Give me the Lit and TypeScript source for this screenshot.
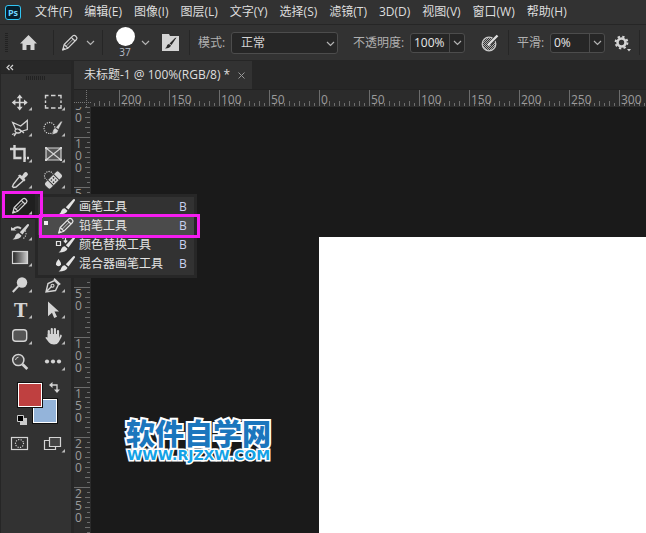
import { LitElement, html, svg, css, nothing } from "lit";
import { customElement, state } from "lit/decorators.js";

const MENUS = ["文件(F)", "编辑(E)", "图像(I)", "图层(L)", "文字(Y)", "选择(S)", "滤镜(T)", "3D(D)", "视图(V)", "窗口(W)", "帮助(H)"];

const brush = svg`<path d="M25 6.500L18.500 15.500L15.800 13.200L23.300 5.200Q25.300 4.300 25 6.500ZM14.800 14.200L17.500 16.700Q16.500 20.300 8.500 20.500Q11 19 11.500 16.500Q12.500 14.200 14.800 14.200Z" fill="currentColor"/>`;
const pencil = svg`<g fill="none" stroke="currentColor" stroke-width="1.200" stroke-linejoin="round"><path d="M8.700 20L10.200 14.500L18.800 5.900Q20.300 4.700 21.900 6.200Q23.700 7.900 22.500 9.500L13.900 18.200Z"/><path d="M10.200 14.500L13.900 18.200M17.300 7.300L21 11"/><path d="M12 16.400L19.300 9" stroke-width=".8"/></g><path d="M8.300 20.500L9.500 17L11.800 19.400Z" fill="currentColor"/>`;
const dots = "0.1 2.2";

interface Tool { name: string; corner?: boolean; art: unknown }

const TOOLS: Tool[] = [
  { name: "移动工具", art: svg`<path d="M15.700 7V20M9 13.500H22.500" stroke="currentColor" stroke-width="1.600"/><path d="M15.700 5.500L18.700 9.200H12.700ZM15.700 21.500L18.700 17.800H12.700ZM7.700 13.500L11.400 10.500V16.500ZM23.700 13.500L20 10.500V16.500Z" fill="currentColor"/>` },
  { name: "矩形选框工具", art: svg`<path d="M8.500 9.500V6.500H11.500M14 6.500H18.500M21 6.500H24V9.500M24 11.500V14M24 16V19H21M18.500 19H14M11.500 19H8.500V16M8.500 14V11.500" fill="none" stroke="currentColor" stroke-width="1.400"/>` },
  { name: "多边形套索工具", art: svg`<path d="M12 15L8.700 7.500L16.700 11L23.300 5.500V14.500L17 16.500M17 16.500Q14 12.500 11.500 14.500Q10 17 13 17.800Q16 18.500 17 16.500ZM12.500 17.500L10 21M10.500 18.500L8 19.500M15 14L20 18" fill="none" stroke="currentColor" stroke-width="1.300"/>` },
  { name: "快速选择工具", art: svg`<circle cx="12.500" cy="13" r="5.500" fill="none" stroke="currentColor" stroke-width="1.300" stroke-linecap="round" stroke-dasharray=${dots}/><path d="M25.500 6.500L21.500 14.500L18.800 12.500L24 6.200ZM18.200 13L21.300 15.300Q21 19 14.500 19.500Q16.500 17.500 16 15.500Q16.500 13.500 18.200 13Z" fill="currentColor" stroke="#323232" stroke-width=".4"/>` },
  { name: "裁剪工具", art: svg`<path d="M6 8H20.500V21M10.500 4V17H17.500M19.500 17H22M23 17H25" fill="none" stroke="currentColor" stroke-width="2.400"/>` },
  { name: "图框工具", art: svg`<rect x="9" y="7" width="15" height="12" fill="#555"/><path d="M9 7H24V19H9ZL24 19M24 7L9 19" fill="none" stroke="currentColor" stroke-width="1.200"/><path d="M8 6h2v2H8zM23 6h2v2h-2zM8 18h2v2H8zM23 18h2v2h-2z" fill="currentColor"/>` },
  { name: "吸管工具", art: svg`<path d="M15.500 9.500L19.500 13.500L12 20L9.500 20.500L8.500 19.500L9.500 17Z" fill="none" stroke="currentColor" stroke-width="1.400"/><path d="M14 8.500L16 7.500L18 9L20 6Q22 4.200 23.400 6Q24.800 7.500 23 9L20.400 11.200L21.500 13L20.200 14.600Z" fill="currentColor"/>` },
  { name: "污点修复画笔工具", art: svg`<circle cx="12" cy="9" r="4.500" fill="none" stroke="currentColor" stroke-width="1.300" stroke-linecap="round" stroke-dasharray=${dots}/><g transform="rotate(-45 16.500 13)"><rect x="6.500" y="8.700" width="20" height="8.600" rx="2.500" fill="currentColor" stroke="#323232"/><path d="M12.500 9V17M20.500 9V17" stroke="#323232"/><g fill="#323232"><circle cx="15" cy="11.500" r=".8"/><circle cx="18" cy="11.500" r=".8"/><circle cx="15" cy="14.500" r=".8"/><circle cx="18" cy="14.500" r=".8"/></g></g>` },
  { name: "铅笔工具", art: pencil },
  { name: "", art: nothing },
  { name: "历史记录画笔工具", art: svg`${brush}<path d="M9 10.500Q12.500 6.500 17 9.500" fill="none" stroke="currentColor" stroke-width="2"/><path d="M7 8L12.500 11.500H7Z" fill="currentColor"/><path d="M21.500 12Q23.500 17 18 20.500" fill="none" stroke="currentColor" stroke-width="1.300" stroke-linecap="round" stroke-dasharray="0.1 2.500"/>` },
  { name: "", art: nothing },
  { name: "渐变工具", art: svg`<defs><linearGradient id="g"><stop stop-color="#222"/><stop offset="1" stop-color="#ccc"/></linearGradient></defs><rect x="8.500" y="6.500" width="15" height="12" fill="url(#g)" stroke="currentColor" stroke-width="1.200"/>` },
  { name: "", art: nothing },
  { name: "减淡工具", art: svg`<circle cx="18" cy="11.500" r="5.200" fill="currentColor"/><path d="M14.500 15L8.800 21" stroke="currentColor" stroke-width="2"/>` },
  { name: "钢笔工具", art: svg`<path d="M9 21L11 12.500L17.500 9.500L21.500 13.500L18.500 19.500ZM9 21L15 15" fill="none" stroke="currentColor" stroke-width="1.400"/><circle cx="15.500" cy="14.800" r="1.500" fill="none" stroke="currentColor" stroke-width="1.100"/><path d="M17.500 7L23.800 13L22.300 14.200L16.500 8.500Z" fill="currentColor"/>` },
  { name: "横排文字工具", art: svg`<text x="16.800" y="19.500" text-anchor="middle" font-family="DejaVu Serif" font-weight="bold" font-size="18" fill="currentColor">T</text>` },
  { name: "路径选择工具", art: svg`<path d="M11 4.500L22 14.500H17.500L20 19.800L17.200 21L15 15.800L11 19.200Z" fill="currentColor"/>` },
  { name: "圆角矩形工具", art: svg`<rect x="8.700" y="6.700" width="14" height="11.600" rx="3" fill="#555" stroke="currentColor" stroke-width="1.400"/>` },
  { name: "抓手工具", art: svg`<path d="M11.800 14V8M14.800 13V6M17.900 13V6.200M21 14V8" stroke="currentColor" stroke-width="2.200" stroke-linecap="round"/><path d="M10.700 11H22.100V15L23.500 11.500Q25.300 11.500 24.700 13.500L21.800 19Q20.500 21.500 17 21.500Q13.500 21.500 12 19.500L8.500 15Q8.500 13.200 10.700 14.500Z" fill="currentColor"/>` },
  { name: "缩放工具", corner: false, art: svg`<circle cx="14.300" cy="11" r="5.600" fill="#444" stroke="currentColor" stroke-width="1.500"/><path d="M18.500 15.300L23.300 20" stroke="currentColor" stroke-width="2.800"/><path d="M11.500 11Q11.800 8.500 14.500 8.200" stroke="currentColor" fill="none"/>` },
  { name: "编辑工具栏", art: svg`<g fill="currentColor"><circle cx="10" cy="12.500" r="2.100"/><circle cx="16" cy="12.500" r="2.100"/><circle cx="22" cy="12.500" r="2.100"/></g>` },
];
// Cells of the right column that sit beneath the open flyout.
const COVERED = new Set([9, 11, 13]);

const FLYOUT = [
  { name: "画笔工具", art: brush },
  { name: "铅笔工具", art: pencil, on: true },
  { name: "颜色替换工具", art: svg`${brush}<path d="M6.500 9.500h4v4h-4zM12 6h2M15.500 5V10M13.800 8.500L15.500 10.500L17.200 8.500" fill="none" stroke="currentColor" stroke-width="1.200"/>` },
  { name: "混合器画笔工具", art: svg`${brush}<path d="M8.500 8Q11.300 11.500 11 13.200Q10.500 15.300 8.500 15.300Q6.500 15.300 6 13.200Q5.700 11.500 8.500 8Z" fill="currentColor"/>` },
];

const RULER_STEP = 50;
const chevron = html`<svg class="chev" viewBox="0 0 9 6"><path d="M1 1L4.500 4.500L8 1" fill="none" stroke="currentColor" stroke-width="1.200"/></svg>`;

@customElement("ps-toolbar")
export class PsToolbar extends LitElement {
  static styles = css`
    * { box-sizing: border-box; }
    :host { display: flex; flex-direction: column; width: 72px; flex: none; background: #323232; border: solid #262626; border-width: 0 1px; color: #d4d4d4; position: relative; z-index: 1; }
    button { font: inherit; color: inherit; background: none; border: 0; padding: 0; margin: 0; display: block; }
    svg { display: block; }
    .collapse { height: 13px; background: #282828; padding-left: 5px; border-bottom: 1px solid #262626; text-align: left; }
    .grip { width: 19px; height: 4px; margin: 2px 0 9px 25px; background: repeating-linear-gradient(90deg, #222 0 1px, transparent 1px 2px); }
    .tools { display: grid; grid-template-columns: 33px 33px; grid-auto-rows: 26px; margin-left: 3px; }
    .cell { position: relative; }
    .cell svg { width: 33px; height: 26px; }
    .active { background: #1f1f1f; }
    .mark { position: absolute; border: 3px solid #f51df0; pointer-events: none; }
    .tool-mark { left: -2px; top: -2px; width: 41px; height: 27px; z-index: 4; }
    .colors { position: relative; height: 55px; }
    .swatch { position: absolute; width: 26px; height: 26px; border: 1px solid #111; box-shadow: inset 0 0 0 1px #fff; }
    .fore { left: 16px; top: 7px; background: #bf4040; z-index: 1; }
    .back { left: 31px; top: 23px; background: #94b4da; }
    .swap { position: absolute; left: 48px; top: 7px; }
    .reset { position: absolute; left: 16px; top: 40px; }
    .flyout { position: absolute; left: 31px; top: 1px; z-index: 3; width: 162px; border: 3px solid #272727; background: #323232; margin: 0; padding: 0 0 2px; list-style: none; }
    .item { position: relative; }
    .item button { display: grid; grid-template-columns: 41px 1fr 14px; align-items: center; width: 152px; height: 19px; font-size: 12px; line-height: 19px; text-align: left; color: #e4e4e4; }
    .item svg { width: 33px; height: 26px; margin: -4px 0 -4px 12px; }
    .on { background: #4b4b4b; }
    .on button::before { content: ""; position: absolute; left: 6px; top: 5px; width: 4px; height: 4px; background: #eee; }
    .item-mark { left: 1px; top: -2px; width: 161px; height: 24px; z-index: 2; }
    kbd { font: inherit; color: #c9d3f0; text-align: center; }
  `;

  tool(t: Tool, i: number) {
    if (COVERED.has(i)) return html`<div class="cell"></div>`;
    const art = html`<button aria-label=${t.name} title=${t.name}><svg viewBox="0 0 33 26">${t.art}${t.corner === false ? nothing : svg`<path d="M28 18V21.500H24.500Z" fill="#bbb"/>`}</svg></button>`;
    if (i !== 8) return html`<div class="cell">${art}</div>`;
    return html`<div class="cell active">${art}<span class="mark tool-mark"></span>
      <ul class="flyout">${FLYOUT.map((f) => html`<li class="item ${f.on ? "on" : ""}">
        <button><svg viewBox="0 0 33 26">${f.art}</svg><span>${f.name}</span><kbd>B</kbd></button>
        ${f.on ? html`<span class="mark item-mark"></span>` : nothing}</li>`)}</ul></div>`;
  }

  render() {
    return html`
      <button class="collapse" aria-label="折叠"><svg width="8" height="7" viewBox="0 0 8 7"><path d="M3.500 1L1 3.500L3.500 6M7 1L4.500 3.500L7 6" fill="none" stroke="currentColor" stroke-width="1.200"/></svg></button>
      <div class="grip"></div>
      <div class="tools">${TOOLS.map((t, i) => this.tool(t, i))}</div>
      <div class="colors">
        <button class="swatch fore" aria-label="前景色"></button>
        <button class="swatch back" aria-label="背景色"></button>
        <button class="swap" aria-label="切换颜色"><svg width="11" height="11" viewBox="0 0 11 11"><path d="M2 3H8V9" fill="none" stroke="currentColor" stroke-width="1.300"/><path d="M0 3L3.500 0V6ZM8 11L5 7.500H11Z" fill="currentColor"/></svg></button>
        <button class="reset" aria-label="默认颜色"><svg width="10" height="10" viewBox="0 0 10 10"><path d="M3 3H10V10H3Z" fill="#ccc"/><path d="M.5.5H6.500V6.500H.5Z" fill="#000" stroke="#ccc"/></svg></button>
      </div>
      <div class="tools">
        <button class="cell" aria-label="快速蒙版"><svg viewBox="0 0 33 26"><rect x="7.500" y="7.500" width="16" height="12" fill="none" stroke="currentColor" stroke-width="1.200"/><circle cx="15.500" cy="13.500" r="4" fill="none" stroke="currentColor" stroke-width="1.300" stroke-linecap="round" stroke-dasharray="0.100 2.400"/></svg></button>
        <button class="cell" aria-label="屏幕模式"><svg viewBox="0 0 33 26"><path d="M7.500 10.500H18.500V19.500H7.500Z" fill="none" stroke="currentColor" stroke-width="1.200"/><path d="M12.500 7.500H23.500V16.500H12.500Z" fill="#444" stroke="currentColor" stroke-width="1.200"/><path d="M28 19V22.500H24.500Z" fill="#bbb"/></svg></button>
      </div>`;
  }
}

@customElement("app-root")
export class AppRoot extends LitElement {
  static styles = css`
    :host { display: flex; flex-direction: column; height: 100vh; overflow: hidden; background: #262626; color: #dedede; font: 12px/16px "Open Sans", "Noto Sans CJK SC", sans-serif; }
    * { box-sizing: border-box; }
    button, input, select { font: inherit; color: inherit; background: none; border: 0; padding: 0; margin: 0; }
    svg { display: block; flex: none; }
    .menubar { display: flex; align-items: center; height: 24px; flex: none; background: #323232; padding-left: 5px; white-space: nowrap; }
    .logo { width: 16px; height: 15px; border: 1px solid #31c5f4; border-radius: 3px; background: #061e2c; color: #6fd6ff; font: bold 9px/13px "Open Sans", sans-serif; text-align: center; margin-right: 14px; }
    .menus { display: flex; gap: 12px; }
    .options { display: flex; align-items: center; height: 37px; flex: none; border: solid #262626; border-width: 1px 0; background: #323232; white-space: nowrap; color: #d4d4d4; }
    .grip { width: 3px; height: 20px; margin: 0 12px 0 5px; background: repeating-linear-gradient(#222 0 1px, transparent 1px 2px); }
    .sep { width: 1px; height: 25px; background: #262626; flex: none; }
    .home { margin-right: 16px; }
    .pencil { margin-right: 3px; }
    .chev { width: 9px; height: 6px; color: #b4b4b4; }
    .drop { margin-right: 7px; }
    .size { display: flex; flex-direction: column; align-items: center; width: 20px; margin: 0 6px 0 12px; font-size: 10px; line-height: 12px; color: #b9bfc8; }
    .dot { width: 19px; height: 19px; border-radius: 50%; background: #fff; }
    .folder { margin: 0 10px 0 5px; }
    .label { color: #b0b0b0; width: 33px; margin-left: 8px; flex: none; }
    .opacity-label { width: 57px; margin-left: 15px; }
    .pick { position: relative; width: 107px; }
    .pick select { appearance: none; width: 107px; height: 22px; border: 1px solid #4c4c4c; border-radius: 3px; background: #262626; padding: 0 20px 0 9px; }
    .pick .chev { position: absolute; right: 3px; top: 9px; }
    .combo { display: flex; width: 55px; height: 20px; border: 1px solid #4c4c4c; border-radius: 3px; background: #262626; }
    .combo input { width: 38px; padding-left: 3px; color: #e8e8e8; }
    .combo button { flex: 1; border-left: 1px solid #4c4c4c; display: grid; place-items: center; }
    .pressure { margin: 0 9px 0 16px; }
    .gear { margin: 0 6px 0 9px; }
    .body { flex: 1; min-height: 0; display: flex; }
    .doc { flex: 1; min-width: 0; display: flex; flex-direction: column; margin-left: 2px; }
    .tabs { display: flex; height: 29px; flex: none; border-bottom: 1px solid #222; }
    .tab { display: flex; align-items: center; gap: 8px; width: 178px; padding-left: 10px; background: #323232; white-space: nowrap; }
    .view { flex: 1; min-height: 0; display: grid; grid-template-columns: 17px 1fr; grid-template-rows: 17px 1fr; }
    .corner { background: #2b2b2b; }
    .hr, .vr { overflow: hidden; background: #2b2b2b; color: #9b9b9b; min-width: 0; min-height: 0; }
    .hr > div { display: flex; margin-left: -22px; }
    .hseg { flex: none; width: 50px; height: 16px; border-left: 1px solid #6c6c6c; padding-left: 1px; line-height: 20px;
      background: linear-gradient(90deg, #6c6c6c 1px, transparent 1px) 4px 100% / 10px 3px repeat-x, linear-gradient(90deg, #6c6c6c 1px, transparent 1px) 9px 100% / 10px 5px repeat-x; }
    .vr > div { margin-top: -20px; }
    .vseg { height: 50px; width: 16px; border-top: 1px solid #6c6c6c; padding-left: 1px; line-height: 12px; display: flex; flex-direction: column;
      background: linear-gradient(#6c6c6c 1px, transparent 1px) 100% 4px / 3px 10px repeat-y, linear-gradient(#6c6c6c 1px, transparent 1px) 100% 9px / 5px 10px repeat-y; }
    .vseg span { height: 12px; flex: none; }
    .canvas { position: relative; background: #1a1a1a; padding: 130px 0 0 228px; display: flex; min-width: 0; min-height: 0; }
    .art { flex: 1; background: #fff; }
    .mark { position: absolute; left: 35px; top: 309px; text-align: center; white-space: nowrap; }
    .mark-cn { font: 900 29px/32px "Noto Sans CJK SC", sans-serif; color: #1b76bd; -webkit-text-stroke: 4px #fff; paint-order: stroke fill; }
    .mark-url { font: bold 14px/14px "DejaVu Sans", sans-serif; color: #14a2e6; -webkit-text-stroke: 3px #fff; paint-order: stroke fill; }
  `;

  @state() private columns = 0;
  @state() private rows = 0;

  private measure = () => {
    this.columns = Math.ceil((window.innerWidth - 69) / RULER_STEP);
    this.rows = Math.ceil((window.innerHeight - 87) / RULER_STEP);
  };

  connectedCallback() {
    super.connectedCallback();
    this.measure();
    window.addEventListener("resize", this.measure);
  }

  disconnectedCallback() {
    window.removeEventListener("resize", this.measure);
    super.disconnectedCallback();
  }

  // The first segment of each ruler is partly scrolled out of view.
  horizontal() {
    return Array.from({ length: this.columns }, (_, i) =>
      html`<span class="hseg">${i === 0 ? "" : Math.abs(i - 5) * RULER_STEP}</span>`);
  }

  vertical() {
    return Array.from({ length: this.rows }, (_, i) => {
      const digits = i === 0 ? [" ", "5", "0"] : [...String(Math.abs(i - 3) * RULER_STEP)];
      return html`<div class="vseg">${digits.map((c) => html`<span>${c}</span>`)}</div>`;
    });
  }

  render() {
    return html`
      <nav class="menubar"><span class="logo">Ps</span><div class="menus">${MENUS.map((m) => html`<button>${m}</button>`)}</div></nav>
      <div class="options">
        <span class="grip"></span>
        <button class="home" aria-label="主页"><svg width="17" height="16" viewBox="0 0 17 16"><path d="M8.500 0L17 8.500H14.500V15H10.500V10H6.500V15H2.500V8.500H0Z" fill="currentColor"/></svg></button>
        <span class="sep"></span>
        <button class="pencil" aria-label="铅笔工具"><svg width="29" height="26" viewBox="0 0 29 26">${pencil}</svg></button>
        <button class="drop" aria-label="工具预设">${chevron}</button>
        <span class="sep"></span>
        <button class="size" aria-label="画笔大小 37"><span class="dot"></span>37</button>
        <button class="drop" aria-label="画笔预设">${chevron}</button>
        <button class="folder" aria-label="画笔设置"><svg width="17" height="18" viewBox="0 0 17 18"><path d="M0 0H7L8 2H17V17H0Z" fill="#d4d4d4"/><path d="M14.500 3.500L9.500 11L7.500 9.500L13 4ZM7 10L9 11.500Q8 14.500 3 14.500Q5 13 5 11.500Q5.500 10 7 10Z" fill="#282828"/></svg></button>
        <span class="sep"></span>
        <label class="label" for="mode">模式:</label>
        <span class="pick"><select id="mode"><option>正常</option></select>${chevron}</span>
        <label class="label opacity-label" for="opacity">不透明度:</label>
        <span class="combo"><input id="opacity" value="100%"><button aria-label="选择不透明度">${chevron}</button></span>
        <button class="pressure" aria-label="压力控制不透明度"><svg width="18" height="18" viewBox="0 0 18 18"><defs><pattern id="p" width="2" height="2" patternUnits="userSpaceOnUse"><path d="M0 0h1v1H0zM1 1h1v1H1z" fill="#aaa"/></pattern></defs><circle cx="8" cy="10" r="6.800" fill="url(#p)" stroke="#c8c8c8" stroke-width="1.300"/><path d="M17.500 1L9 9.500" stroke="#323232" stroke-width="4"/><path d="M16.500 1.500L9 9L7 11.500" stroke="#ddd" stroke-width="2.400" fill="none"/></svg></button>
        <span class="sep"></span>
        <label class="label" for="smooth">平滑:</label>
        <span class="combo"><input id="smooth" value="0%"><button aria-label="选择平滑">${chevron}</button></span>
        <button class="gear" aria-label="平滑选项"><svg width="19" height="18" viewBox="0 0 19 18"><circle cx="7.500" cy="8.500" r="4" fill="none" stroke="currentColor" stroke-width="2.600"/><circle cx="7.500" cy="8.500" r="5.900" fill="none" stroke="currentColor" stroke-width="2" stroke-dasharray="2.320 2.320"/><path d="M13 15H17L15 17.500Z" fill="currentColor"/></svg></button>
        <span class="sep"></span>
      </div>
      <div class="body">
        <ps-toolbar></ps-toolbar>
        <main class="doc">
          <div class="tabs"><div class="tab"><span>未标题-1 @ 100%(RGB/8) *</span><button aria-label="关闭"><svg width="7" height="7" viewBox="0 0 7 7"><path d="M.5.5L6.500 6.500M6.500.5L.5 6.500" stroke="#999"/></svg></button></div></div>
          <div class="view">
            <svg class="corner" width="17" height="17" viewBox="0 0 17 17"><path d="M12.500 0V17M0 12.500H17" stroke="#777" stroke-dasharray="1 1"/></svg>
            <div class="hr"><div>${this.horizontal()}</div></div>
            <div class="vr"><div>${this.vertical()}</div></div>
            <div class="canvas"><div class="art"></div>
              <div class="mark"><div class="mark-cn">软件自学网</div><div class="mark-url">WWW.RJZXW.COM</div></div>
            </div>
          </div>
        </main>
      </div>`;
  }
}
